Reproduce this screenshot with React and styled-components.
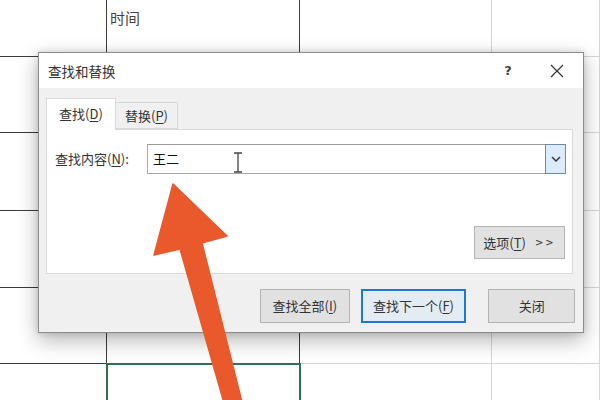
import React from "react";
import styled, { createGlobalStyle } from "styled-components";

const Global = createGlobalStyle`
  html, body { margin: 0; padding: 0; background: #fff; overflow: hidden; }
  body { font-family: "Noto Sans CJK SC", "Noto Sans", sans-serif; }
  * { box-sizing: border-box; }
`;

const Page = styled.div`
  position: relative;
  width: 600px;
  height: 400px;
  overflow: hidden;
  background: #fff;
`;

const Sheet = styled.div`
  display: grid;
  grid-template-columns: 107px 193px 192px 1fr;
  grid-template-rows: 57px 76px 78px 77px 76px 1fr;
  width: 600px;
  height: 420px;
`;

const Cell = styled.div`
  border-right: ${(p) => (p.$dark ? "1.5px solid #3c3c3c" : "1px solid #d6d6d6")};
  border-bottom: ${(p) => (p.$dark ? "1.5px solid #3c3c3c" : "1px solid #d6d6d6")};
  font-size: 15px;
  line-height: 18px;
  color: #444;
  padding: 9px 0 0 3px;
  outline: ${(p) => (p.$selected ? "2px solid #2a7350" : "none")};
  outline-offset: -1px;
`;

const Dialog = styled.div`
  position: absolute;
  left: 38px;
  top: 52px;
  width: 546px;
  height: 281px;
  border: 1px solid #8c8c8c;
  background: #f0f0f0;
  box-shadow: 0 7px 20px rgba(0, 0, 0, 0.3), 0 0 6px rgba(0, 0, 0, 0.14);
  display: flex;
  flex-direction: column;
`;

const TitleBar = styled.div`
  height: 35px;
  background: #fff;
  display: flex;
  align-items: center;
  padding-left: 9px;
  font-size: 13.5px;
  color: #333;
`;

const TitleText = styled.div`
  flex: 1;
  line-height: 18px;
`;

const Help = styled.div`
  width: 20px;
  font-family: "DejaVu Sans", sans-serif;
  font-weight: bold;
  font-size: 13px;
  color: #444;
  text-align: center;
  margin-right: 32px;
`;

const CloseX = styled.div`
  width: 14px;
  height: 14px;
  margin-right: 19px;
  display: flex;
`;

const Body = styled.div`
  flex: 1;
  display: flex;
  flex-direction: column;
  padding: 10px 10px 0 7px;
`;

const Tabs = styled.div`
  display: flex;
  align-items: flex-end;
  height: 31px;
`;

const Tab = styled.div`
  height: ${(p) => (p.$active ? "32px" : "27px")};
  width: ${(p) => (p.$active ? "70px" : "62px")};
  background: ${(p) => (p.$active ? "#fff" : "#f0f0f0")};
  border: 1px solid #d9d9d9;
  border-bottom: ${(p) => (p.$active ? "none" : "1px solid #d9d9d9")};
  border-left: ${(p) => (p.$active ? "1px solid #d9d9d9" : "none")};
  margin-bottom: ${(p) => (p.$active ? "-1px" : "0")};
  position: relative;
  z-index: ${(p) => (p.$active ? 1 : 0)};
  display: flex;
  align-items: center;
  justify-content: center;
  font-size: 13px;
  line-height: 16px;
  color: #333;
  padding-bottom: ${(p) => (p.$active ? "2px" : "0")};
`;

const U = styled.span`
  text-decoration: underline;
  text-underline-offset: 2px;
`;

const Panel = styled.div`
  height: 145px;
  background: #fff;
  border: 1px solid #d9d9d9;
  display: flex;
  flex-direction: column;
  padding: 14px 6px 14px 8px;
`;

const FindRow = styled.div`
  display: flex;
  align-items: center;
  gap: 8px;
`;

const Label = styled.div`
  font-size: 13px;
  line-height: 16px;
  color: #333;
  width: 84px;
`;

const Combo = styled.div`
  position: relative;
  flex: 1;
  height: 30px;
  border: 1px solid #a8a8a8;
  border-top-color: #9a9a9a;
  display: flex;
  align-items: center;
  padding-left: 5px;
  font-size: 13px;
  color: #111;
`;

const ComboText = styled.div`
  flex: 1;
  line-height: 16px;
`;

const DropBtn = styled.div`
  width: 21px;
  height: 30px;
  margin: -1px -1px -1px 0;
  background: #dcecfb;
  border: 1.5px solid #6d8aa6;
  display: flex;
  align-items: center;
  justify-content: center;
`;

const Cursor = styled.svg`
  position: absolute;
  left: 85px;
  top: 7px;
`;

const Spacer = styled.div`
  flex: 1;
`;

const OptionsRow = styled.div`
  display: flex;
  justify-content: flex-end;
  padding-right: 1px;
`;

const Button = styled.div`
  width: ${(p) => p.$w}px;
  height: ${(p) => p.$h || 34}px;
  background: ${(p) => (p.$default ? "#e3ebf3" : "#e1e1e1")};
  border: ${(p) => (p.$default ? "2px solid #1f78cf" : "1px solid #b4b4b4")};
  display: flex;
  align-items: center;
  justify-content: center;
  font-size: 13px;
  line-height: 16px;
  color: #333;
  white-space: nowrap;
`;

const Gt = styled.span`
  font-family: "DejaVu Sans", sans-serif;
  font-size: 10px;
  margin-left: 9px;
  letter-spacing: 2px;
`;

const Footer = styled.div`
  display: flex;
  align-items: center;
  margin-top: 15px;
  padding-left: 214px;
  margin-right: -2px;
`;

const Gap = styled.div`
  width: ${(p) => p.$w}px;
`;

const Arrow = styled.svg`
  position: absolute;
  left: 0;
  top: 0;
  pointer-events: none;
`;

export default function App() {
  const rows = 6;
  const cols = 4;
  const cells = [];
  for (let r = 0; r < rows; r++) {
    for (let c = 0; c < cols; c++) {
      cells.push(
        <Cell key={`${r}-${c}`} $dark={c < 2} $selected={r === 5 && c === 1}>
          {r === 0 && c === 1 ? "时间" : ""}
        </Cell>
      );
    }
  }
  return (
    <Page>
      <Global />
      <Sheet>{cells}</Sheet>
      <Dialog>
        <TitleBar>
          <TitleText>查找和替换</TitleText>
          <Help>?</Help>
          <CloseX>
            <svg width="14" height="14" viewBox="0 0 14 14">
              <path d="M1 1 L13 13 M13 1 L1 13" stroke="#333" strokeWidth="1.2" fill="none" />
            </svg>
          </CloseX>
        </TitleBar>
        <Body>
          <Tabs>
            <Tab $active>
              查找(<U>D</U>)
            </Tab>
            <Tab>
              替换(<U>P</U>)
            </Tab>
          </Tabs>
          <Panel>
            <FindRow>
              <Label>
                查找内容(<U>N</U>):
              </Label>
              <Combo>
                <ComboText>王二</ComboText>
                <Cursor width="10" height="21" viewBox="0 0 10 21">
                  <path d="M1 1 H9 M5 1 V20 M1 20 H9" stroke="#444" strokeWidth="1.3" fill="none" />
                </Cursor>
                <DropBtn>
                  <svg width="10" height="6" viewBox="0 0 10 6">
                    <path d="M1 1 L5 5 L9 1" stroke="#3a3a3a" strokeWidth="1.5" fill="none" />
                  </svg>
                </DropBtn>
              </Combo>
            </FindRow>
            <Spacer />
            <OptionsRow>
              <Button $w={91} $h={33}>
                选项(<U>T</U>)<Gt>&gt;&gt;</Gt>
              </Button>
            </OptionsRow>
          </Panel>
          <Footer>
            <Button $w={90}>
              查找全部(<U>I</U>)
            </Button>
            <Gap $w={11} />
            <Button $w={106} $default>
              查找下一个(<U>F</U>)
            </Button>
            <Gap $w={22} />
            <Button $w={87}>关闭</Button>
          </Footer>
        </Body>
      </Dialog>
      <Arrow width="600" height="400" viewBox="0 0 600 400">
        <polygon
          points="173,184 227,236 202,243 244,410 226,410 180,249 154,255"
          fill="#e9592b"
          stroke="#e9592b"
          strokeWidth="1.5"
          strokeLinejoin="round"
        />
      </Arrow>
    </Page>
  );
}
